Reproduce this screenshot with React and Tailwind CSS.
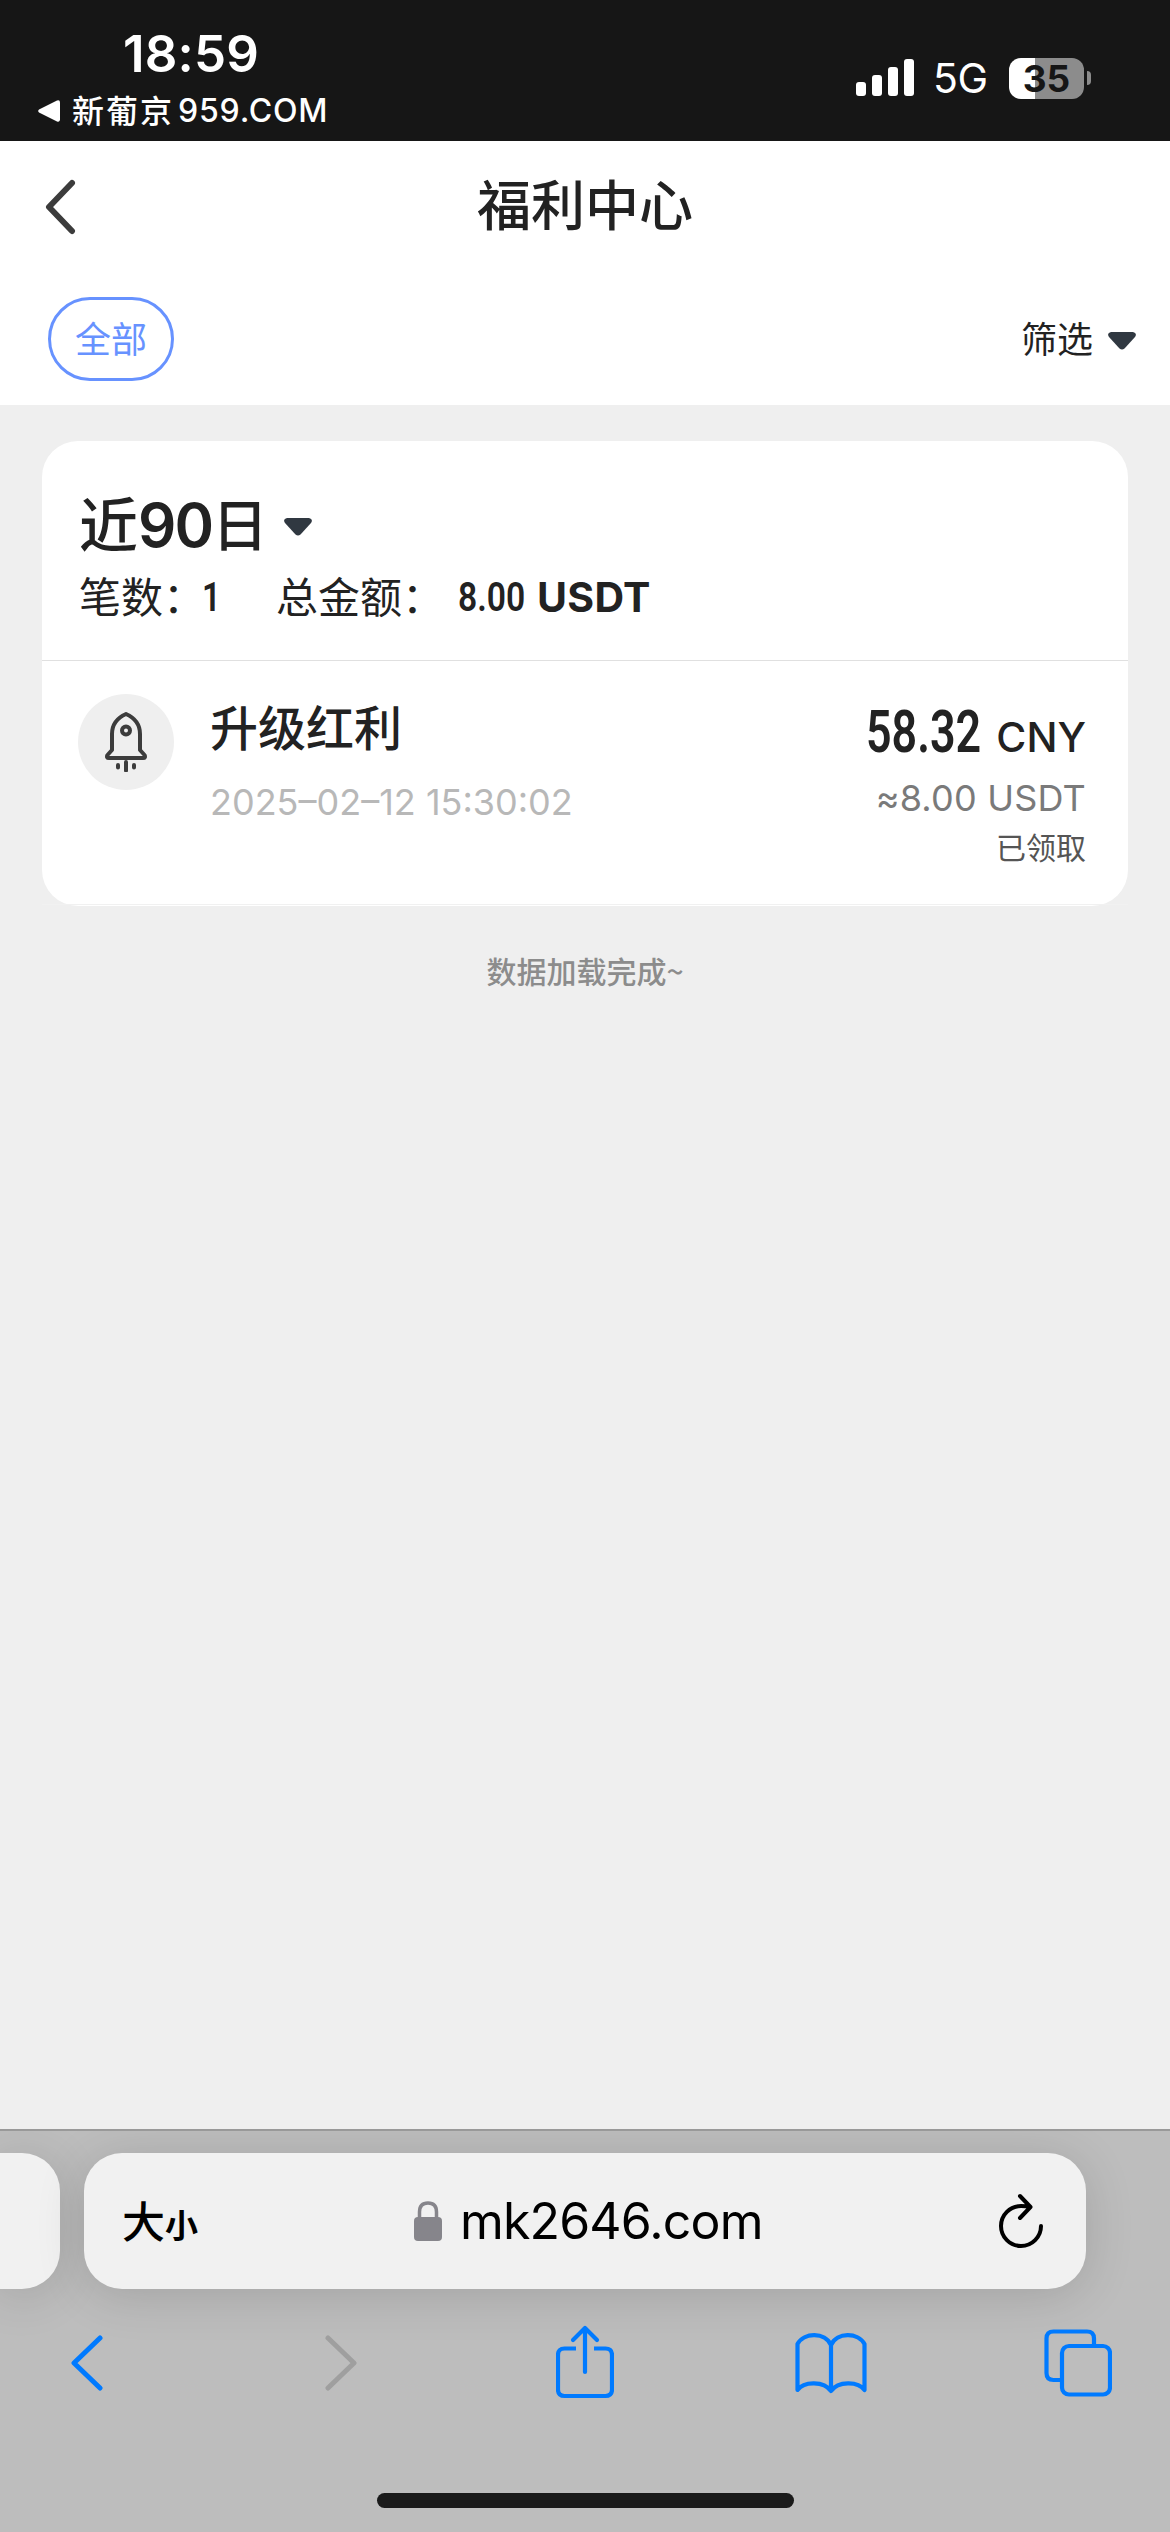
import clsx from "clsx";

const CJK = "font-['Noto_Sans_CJK_SC',sans-serif]";
const LATIN = "font-['Inter','Noto_Sans_CJK_SC',sans-serif]";
const DIN = "font-['Roboto',sans-serif]";

function StatusBar() {
  return (
    <div className={clsx("flex h-[141px] shrink-0 justify-between bg-[#161616] text-white", LATIN)}>
      <div className="flex flex-col pl-[38px] pt-[28px]">
        <div className="pl-[85px] text-[51px] font-semibold leading-[51px] tracking-[0.2px]">18:59</div>
        <div className="mt-[14px] flex h-[36px] items-center">
          <svg width="22" height="22" viewBox="0 0 22 22" fill="currentColor">
            <path d="M1 9.6 19 .6Q22 -.4 22 2.5V19.5Q22 22.4 19 21.4L1 12.4Q-.6 11 1 9.6Z" />
          </svg>
          <span className={clsx("ml-[12px] pb-[4px] text-[32px] font-medium leading-[36px] tracking-[2px]", CJK)}>新葡京</span>
          <span className="ml-[4px] text-[32px] font-medium leading-[36px] tracking-[0.800px]">959.COM</span>
        </div>
      </div>

      <div className="flex h-[156px] items-center pr-[79px]">
        <svg width="58" height="38" viewBox="0 0 58 38" fill="currentColor">
          <rect x="0" y="23" width="10" height="14" rx="3" />
          <rect x="16" y="16" width="10" height="21" rx="3" />
          <rect x="32" y="8" width="10" height="29" rx="3" />
          <rect x="48" y="0" width="10" height="37" rx="3" />
        </svg>
        <span className="ml-[19px] w-[56px] text-[41px] leading-[41px] tracking-[-0.500px]">5G</span>
        <div className="ml-[20px] flex h-[41px] w-[75px] items-center justify-center rounded-[12px] bg-[linear-gradient(90deg,#fff_26px,#8c8c8c_26px)] text-[37px] font-bold leading-[37px] text-[#161616]">
          35
        </div>
        <div className="ml-[3px] h-[14px] w-[4px] rounded-r-full bg-[#8c8c8c]" />
      </div>
    </div>
  );
}

function Caret() {
  return (
    <svg width="28" height="18" viewBox="0 0 28 18" fill="#303841">
      <path d="M3 0H25Q29.500 1 27 5L16.500 16.500Q14 18.500 11.500 16.500L1 5Q-1.500 1 3 0Z" />
    </svg>
  );
}

function PageHeader() {
  return (
    <div className={clsx("flex h-[264px] shrink-0 flex-col bg-white text-[#222]", CJK)}>
      <div className="grid h-[131px] grid-cols-[200px_1fr_200px] items-center">
        <svg className="ml-[45px]" width="31" height="56" viewBox="0 0 31 56" fill="none" stroke="#3c3c3c" strokeWidth="6" strokeLinecap="round" strokeLinejoin="round">
          <path d="M27 4 4 28 27 52" />
        </svg>
        <h1 className="pb-[7px] text-center text-[54px] font-medium leading-[54px]">福利中心</h1>
      </div>
      <div className="mt-[25px] flex h-[84px] items-center justify-between pl-[48px] pr-[34px]">
        <button className="flex h-[84px] w-[126px] items-center justify-center rounded-full border-[3px] border-[#6792ff] pb-[4px] text-[36px] leading-[36px] text-[#6792ff]">
          全部
        </button>
        <button className="flex items-center gap-[15px]">
          <span className="pb-[4px] text-[36px] leading-[36px]">筛选</span>
          <span className="pt-[4px]">
            <Caret />
          </span>
        </button>
      </div>
    </div>
  );
}

function RocketIcon() {
  return (
    <svg width="42" height="60" viewBox="0 0 42 60" fill="none" stroke="#3c3c3c" strokeWidth="4" strokeLinecap="round" strokeLinejoin="round">
      <path d="M21 2C12 6 7 13 7 22V38L2.500 43Q1 46 4 46H38Q41 46 39.500 43L35 38V22C35 13 30 6 21 2Z" />
      <circle cx="21" cy="18.500" r="4" />
      <path d="M13 53V55.500M21 50V58.500M29 53V55.500" />
    </svg>
  );
}

function RecordCard() {
  return (
    <div className="mx-[42px] mt-[36px] flex h-[465px] flex-col rounded-[36px] bg-white pb-px text-[#222]">
      <div className="h-[220px] border-b border-[#e0e0e0] pl-[37px] pt-[54px]">
        <div className="flex h-[60px] items-center font-medium">
          <span className={clsx("pb-[7px] text-[59px] leading-[60px]", CJK)}>近</span>
          <span className={clsx("text-[60px] font-semibold leading-[60px] tracking-[-2px]", LATIN)}>90</span>
          <span className={clsx("pb-[7px] text-[56px] leading-[60px]", CJK)}>日</span>
          <span className="ml-[16px] pt-[4px]">
            <Caret />
          </span>
        </div>
        <div className="mt-[21px] flex h-[42px] items-center text-[42px] leading-[42px]">
          <span className={clsx("pb-[5px]", CJK)}>笔数：</span>
          <span className={clsx("-ml-[3px] w-[74px] origin-left scale-x-[0.8] text-[41px] font-semibold", DIN)}>1</span>
          <span className={clsx("pb-[5px]", CJK)}>总金额：</span>
          <span className={clsx("ml-[14px] w-[79px] origin-left scale-x-[0.82] text-[41px] font-semibold", DIN)}>8.00</span>
          <span className={clsx("text-[41px] font-bold tracking-[0.300px]", LATIN)}>USDT</span>
        </div>
      </div>

      <div className="flex grow justify-between border-b border-[#f1f1f1] pl-[36px] pr-[42px] pt-[33px]">
        <div className="flex">
          <div className="flex size-[96px] items-center justify-center rounded-full bg-[#efefef]">
            <RocketIcon />
          </div>
          <div className="ml-[36px] pt-[7px]">
            <div className={clsx("text-[48px] font-medium leading-[48px]", CJK)}>升级红利</div>
            <div className={clsx("mt-[35px] text-[36px] leading-[36px] text-[#b8b8b8]", LATIN)}>2025–02–12 15:30:02</div>
          </div>
        </div>
        <div className={clsx("flex flex-col items-end pt-[8px]", LATIN)}>
          <div className="flex items-baseline">
            <span className={clsx("w-[130px] origin-left scale-x-[0.76] text-[59px] font-semibold leading-[59px]", DIN)}>58.32</span>
            <span className="text-[41px] font-medium leading-[41px]">CNY</span>
          </div>
          <div className="mt-[19px] text-[36px] leading-[36px] tracking-[0.200px] text-[#7a7a7a]">≈8.00 USDT</div>
          <div className={clsx("mt-[15px] text-[30px] leading-[30px] text-[#555]", CJK)}>已领取</div>
        </div>
      </div>
    </div>
  );
}

function BrowserBar() {
  return (
    <div className={clsx("flex h-[403px] shrink-0 flex-col overflow-hidden border-t-2 border-[#999] bg-[#bdbdbd]", LATIN)}>
      <div className="mt-[22px] flex h-[136px] gap-[24px]">
        <div className="w-[60px] rounded-r-[38px] bg-[#f1f1f1] shadow-[0_6px_50px_rgba(0,0,0,0.14)]" />
        <div className="flex w-[1002px] items-center rounded-[38px] bg-[#f1f1f1] pl-[38px] pr-[42px] text-black shadow-[0_6px_50px_rgba(0,0,0,0.14)]">
          <div className={clsx("flex w-[78px] items-baseline pb-[4px]", CJK)}>
            <span className="text-[43px] font-medium leading-[43px]">大</span>
            <span className="text-[33px] font-bold leading-[33px]">小</span>
          </div>
          <div className="ml-[214px] flex items-center">
            <svg width="28" height="40" viewBox="0 0 28 40">
              <rect x="0" y="16" width="28" height="24" rx="4" fill="#86858b" />
              <path d="M5.500 18V11Q5.500 2 14 2T22.500 11V18" fill="none" stroke="#86858b" strokeWidth="3.500" />
            </svg>
            <span className="ml-[18px] text-[50px] leading-[50px] tracking-[-0.850px]">mk2646.com</span>
          </div>
          <svg className="ml-auto" width="46" height="56" viewBox="0 0 46 56" fill="none" stroke="currentColor" strokeWidth="4" strokeLinecap="round" strokeLinejoin="round">
            <path d="M43 33A20 20 0 1 1 23 13Q28 13 32 14M22 3 32.500 14 22 25" />
          </svg>
        </div>
      </div>

      <div className="mt-[34px] flex h-[80px] items-center pl-[70px] text-[#007aff]">
        <svg width="33" height="56" viewBox="0 0 33 56" fill="none" stroke="currentColor" strokeWidth="5" strokeLinecap="round" strokeLinejoin="round">
          <path d="M30 3 4 28 30 53" />
        </svg>
        <svg className="ml-[222px] text-[#9f9f9f]" width="33" height="56" viewBox="0 0 33 56" fill="none" stroke="currentColor" strokeWidth="5" strokeLinecap="round" strokeLinejoin="round">
          <path d="M3 3 29 28 3 53" />
        </svg>
        <svg className="-mt-[3px] ml-[198px]" width="58" height="74" viewBox="0 0 58 74" fill="none" stroke="currentColor" strokeWidth="4.200" strokeLinecap="round" strokeLinejoin="round">
          <path d="M20 23.500H8.500Q2 23.500 2 30V64.500Q2 71 8.500 71H49.500Q56 71 56 64.500V30Q56 23.500 49.500 23.500H38" strokeLinecap="butt" />
          <path d="M29 47V4M17 15 29 3 41 15" />
        </svg>
        <svg className="ml-[181px]" width="72" height="62" viewBox="0 0 72 62" fill="none" stroke="currentColor" strokeWidth="4.200" strokeLinecap="round" strokeLinejoin="round">
          <path d="M36 13C30 0 9 0 2.500 12V58C9 49 29 49 36 59C43 49 63 49 69.500 58V12C63 0 42 0 36 13ZV59" />
        </svg>
        <svg className="ml-[177px]" width="68" height="68" viewBox="0 0 68 68" fill="none" stroke="currentColor" strokeWidth="4.200">
          <rect x="18" y="17" width="48" height="48.500" rx="7" />
          <path d="M50 16V9.500Q50 2.500 43 2.500H9.500Q2.500 2.500 2.500 9.500V44Q2.500 51 9.500 51H17" />
        </svg>
      </div>

      <div className="mx-auto mt-[90px] h-[15px] w-[417px] rounded-full bg-[#1a1a1a]" />
    </div>
  );
}

export default function App() {
  return (
    <div className="flex h-[2532px] w-[1170px] flex-col overflow-hidden bg-[#efefef]">
      <StatusBar />
      <PageHeader />
      <div className="flex grow flex-col">
        <RecordCard />
        <p className={clsx("mt-[49px] text-center text-[30px] font-medium leading-[30px] text-[#8c8c8c]", CJK)}>数据加载完成~</p>
      </div>
      <BrowserBar />
    </div>
  );
}
